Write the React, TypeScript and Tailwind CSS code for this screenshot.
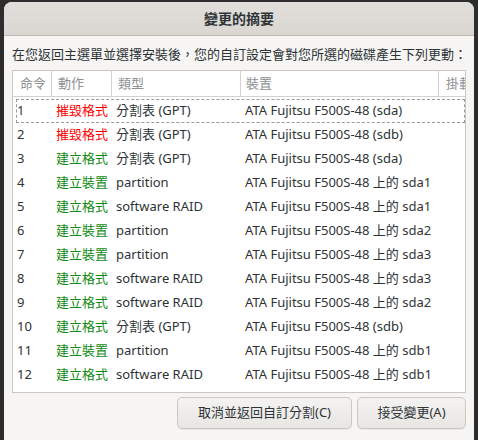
const rows: [string, string, string, string][] = [
  ["1", "摧毀格式", "分割表 (GPT)", "ATA Fujitsu F500S-48 (sda)"],
  ["2", "摧毀格式", "分割表 (GPT)", "ATA Fujitsu F500S-48 (sdb)"],
  ["3", "建立格式", "分割表 (GPT)", "ATA Fujitsu F500S-48 (sda)"],
  ["4", "建立裝置", "partition", "ATA Fujitsu F500S-48 上的 sda1"],
  ["5", "建立格式", "software RAID", "ATA Fujitsu F500S-48 上的 sda1"],
  ["6", "建立裝置", "partition", "ATA Fujitsu F500S-48 上的 sda2"],
  ["7", "建立裝置", "partition", "ATA Fujitsu F500S-48 上的 sda3"],
  ["8", "建立格式", "software RAID", "ATA Fujitsu F500S-48 上的 sda3"],
  ["9", "建立格式", "software RAID", "ATA Fujitsu F500S-48 上的 sda2"],
  ["10", "建立格式", "分割表 (GPT)", "ATA Fujitsu F500S-48 (sdb)"],
  ["11", "建立裝置", "partition", "ATA Fujitsu F500S-48 上的 sdb1"],
  ["12", "建立格式", "software RAID", "ATA Fujitsu F500S-48 上的 sdb1"],
  ["13", "建立裝置", "partition", "ATA Fujitsu F500S-48 上的 sdb2"],
];

const font = { fontFamily: '"Noto Sans", "Noto Sans CJK TC", sans-serif' };

export default function App() {
  return (
    <div style={font} className="w-[478px] h-[440px] bg-[#2d2d2d] px-[4px] pt-[2px] flex flex-col overflow-hidden">
      <div className="flex-1 flex flex-col bg-[#f6f5f4] rounded-t-[8px] overflow-hidden">
        <div className="h-[34px] shrink-0 flex items-center justify-center bg-gradient-to-b from-[#e1dedb] to-[#dad6d2] border-b border-[#bfb8b1]">
          <span className="text-[14px] font-bold text-[#2e3436]">變更的摘要</span>
        </div>

        <div className="px-[8px] pt-[8px] text-[13px] leading-[20px] text-[#2e3436] whitespace-nowrap">
          在您返回主選單並選擇安裝後，您的自訂設定會對您所選的磁碟產生下列更動：
        </div>

        <div className="mx-[8px] mt-[6px] h-[323px] border border-[#cdc7c2] bg-white overflow-hidden flex flex-col">
          <div className="grid grid-cols-[39px_60px_129px_198px_1fr] h-[26px] shrink-0 border-b border-[#d6d1cd] text-[13px] text-[#8e9091]">
            <div className="pl-[7px] flex items-center border-r border-[#d6d1cd]">命令</div>
            <div className="pl-[6px] flex items-center border-r border-[#d6d1cd]">動作</div>
            <div className="pl-[6px] flex items-center border-r border-[#d6d1cd]">類型</div>
            <div className="pl-[5px] flex items-center border-r border-[#d6d1cd]">裝置</div>
            <div className="pl-[7px] flex items-center overflow-hidden whitespace-nowrap">掛載</div>
          </div>
          <div className="flex-1 overflow-hidden pt-[2px]">
            {rows.map(([n, act, type, dev], i) => (
              <div
                key={n}
                className={
                  i === 0
                    ? "grid grid-cols-[39px_60px_129px_198px_1fr] h-[24px] items-center text-[13px] text-[#2e3436] whitespace-nowrap ml-[3px] border border-dashed border-[#9a9a9a]"
                    : "grid grid-cols-[39px_60px_129px_198px_1fr] h-[24px] items-center text-[13px] text-[#2e3436] whitespace-nowrap ml-[3px] border border-transparent"
                }
              >
                <div>{n}</div>
                <div className={act === "摧毀格式" ? "text-[#ff0000]" : "text-[#128a12]"}>{act}</div>
                <div>{type}</div>
                <div>{dev}</div>
                <div />
              </div>
            ))}
          </div>
        </div>

        <div className="flex justify-end gap-[5px] mx-[8px] mt-[4px]">
          <button className="w-[175px] h-[32px] rounded-[5px] border border-[#cdc7c2] bg-gradient-to-b from-[#f4f3f2] to-[#e8e6e3] text-[13px] text-[#2e3436] shadow-[0_1px_0_rgba(0,0,0,0.06)]">
            取消並返回自訂分割(C)
          </button>
          <button className="w-[109px] h-[32px] rounded-[5px] border border-[#cdc7c2] bg-gradient-to-b from-[#f4f3f2] to-[#e8e6e3] text-[13px] text-[#2e3436] shadow-[0_1px_0_rgba(0,0,0,0.06)]">
            接受變更(A)
          </button>
        </div>
      </div>
    </div>
  );
}
